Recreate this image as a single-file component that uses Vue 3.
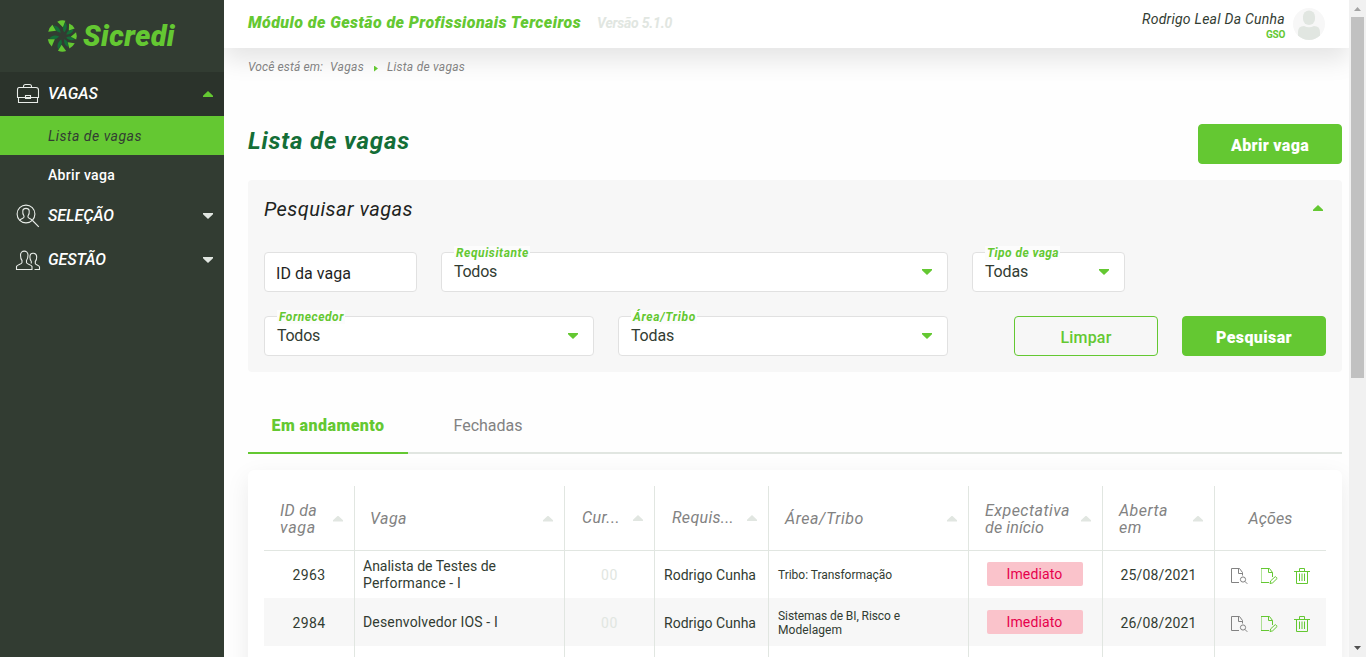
<script setup>
const fit = (el, { value }) => {
  el.style.letterSpacing = '0px'
  const natural = el.getBoundingClientRect().width
  const count = el.textContent.length
  el.style.letterSpacing = `${(value - natural) / count}px`
}
const vFit = { mounted: fit }

const blades = [
  { angle: -6, scale: 1 },
  { angle: -58, scale: 1 },
  { angle: -117, scale: 1 },
  { angle: 184, scale: 1 },
  { angle: 138, scale: 0.9 },
  { angle: 90, scale: 0.88 },
  { angle: 42, scale: 0.9 },
]

const menu = [
  { id: 'selecao', label: 'SELEÇÃO', width: 66 },
  { id: 'gestao', label: 'GESTÃO', width: 58 },
]

const columns = [
  { key: 'id', lines: [['ID da', 37], ['vaga', 36]], sort: true },
  { key: 'vaga', lines: [['Vaga', 37]], sort: true },
  { key: 'cur', lines: [['Cur...', 38]], sort: true, clipped: true },
  { key: 'req', lines: [['Requis...', 62]], sort: true, clipped: true },
  { key: 'area', lines: [['Área/Tribo', 79]], sort: true },
  { key: 'exp', lines: [['Expectativa', 85], ['de início', 59]], sort: true },
  { key: 'data', lines: [['Aberta', 49], ['em', 23]], sort: true },
  { key: 'acoes', lines: [['Ações', 44]], sort: false },
]

const rows = [
  {
    id: '2963',
    vaga: [['Analista de Testes de', 133], ['Performance - I', 98]],
    area: [['Tribo: Transformação', 114]],
    date: '25/08/2021',
  },
  {
    id: '2984',
    vaga: [['Desenvolvedor IOS - I', 135]],
    area: [['Sistemas de BI, Risco e', 122], ['Modelagem', 64]],
    date: '26/08/2021',
  },
  { blank: true },
]
</script>

<template>
  <div class="app">
    <aside class="sidebar">
      <div class="logo">
        <svg class="logo-mark" width="32" height="32" viewBox="-16 -16 32 32">
          <g v-for="b in blades" :key="b.angle" :transform="`rotate(${b.angle}) scale(${b.scale})`">
            <path d="M3.800-13.500C5.800-9.500 4.600-6.500 1.600-3.600C.4-6 .4-8.500 1.600-10Z" fill="#146e37" />
            <path d="M-4.200-14.800Q0-16.400 4-15L.8-8.800Z" fill="#64c832" />
          </g>
        </svg>
        <span v-fit="92" class="logo-text">Sicredi</span>
      </div>

      <nav>
        <div class="group open">
          <svg class="nav-icon" width="26" height="24" viewBox="0 0 26 24">
            <g fill="none" stroke="#e8ece8" stroke-width="1.100">
              <path d="M8.500 5.500V4.500Q8.500 2.500 10.500 2.500H14.500Q16.500 2.500 16.500 4.500V5.500" />
              <path d="M4 5.500H21Q23.500 5.500 23.500 8V15.500H15.500V13.500H10.500V15.500H2.500V8Q2.500 5.500 4 5.500Z" />
              <path d="M10.500 15.500H15.500V16.500H10.500ZM3.500 15.500V20.500H22.500V15.500" />
            </g>
          </svg>
          <span v-fit="50" class="group-label">VAGAS</span>
          <i class="tri up green"></i>
        </div>
        <div class="sub active"><span v-fit="94">Lista de vagas</span></div>
        <div class="sub"><span v-fit="67">Abrir vaga</span></div>
        <div v-for="m in menu" :key="m.id" class="group">
          <svg v-if="m.id === 'selecao'" class="nav-icon" width="26" height="26" viewBox="0 0 26 26">
            <g fill="none" stroke="#e8ece8" stroke-width="1.100">
              <circle cx="11" cy="11" r="8.900" />
              <path d="M17.500 17.500L23.800 23.800" />
              <path d="M5 17.500C5.500 15.500 9 15.500 9 14V13C7.800 11.500 7.500 10 7.800 7.800C8.200 4.600 13.800 4.600 14.200 7.800C14.500 10 14.200 11.500 13 13V14C13 15.500 16.500 15.500 17 17.500" />
            </g>
          </svg>
          <svg v-else class="nav-icon" width="26" height="26" viewBox="0 0 26 26">
            <g fill="none" stroke="#e8ece8" stroke-width="1.100">
              <path d="M1.500 22.500V19.500C2 17.500 7 17.500 7 15.500V13.500C5.600 12 5.500 10 5.500 8C5.500 2.800 13 2.800 13 8C13 10 12.700 12 11.500 13.500V15.500C11.500 17.500 16.500 17.500 17 19.500V22.500Z" />
              <path d="M15 9C15.500 5 21.700 5.500 21.700 10C21.700 12 21.500 13.300 20.300 14.500V16.500C20.300 18 24.500 18 24.500 20V22.500H19.500M15 9C14.700 11.500 15 13 16.300 14.500V16.500" />
            </g>
          </svg>
          <span v-fit="m.width" class="group-label">{{ m.label }}</span>
          <i class="tri down pale"></i>
        </div>
      </nav>
    </aside>

    <main class="main">
      <header class="topbar">
        <span v-fit="333" class="module">Módulo de Gestão de Profissionais Terceiros</span>
        <span v-fit="75" class="version">Versão 5.1.0</span>
        <div class="user">
          <span v-fit="143" class="user-name">Rodrigo Leal Da Cunha</span>
          <span v-fit="19" class="user-unit">GSO</span>
        </div>
        <svg class="avatar" width="32" height="32" viewBox="0 0 32 32">
          <defs><clipPath id="round"><circle cx="16" cy="16" r="16" /></clipPath></defs>
          <g clip-path="url(#round)">
            <rect width="32" height="32" fill="#f7f7f7" />
            <rect x="10" y="2.500" width="12" height="14.500" rx="6" fill="#e1e6e1" />
            <path d="M5 32V24Q5 18 11 18Q16 20.500 21 18Q27 18 27 24V32Z" fill="#e1e6e1" />
          </g>
        </svg>
      </header>

      <div class="crumbs">
        <span v-fit="75">Você está em:</span>
        <span v-fit="34" class="crumb">Vagas</span>
        <i class="crumb-arrow"></i>
        <span v-fit="78">Lista de vagas</span>
      </div>

      <div class="title-row">
        <h1><span v-fit="162">Lista de vagas</span></h1>
        <button class="btn solid"><span v-fit="78">Abrir vaga</span></button>
      </div>

      <section class="search">
        <div class="search-head">
          <h2><span v-fit="149">Pesquisar vagas</span></h2>
          <i class="tri up green"></i>
        </div>
        <div class="fields first">
          <div class="field plain"><span v-fit="75">ID da vaga</span></div>
          <div class="field">
            <label><span v-fit="73">Requisitante</span></label>
            <span v-fit="43">Todos</span><i class="tri down green"></i>
          </div>
          <div class="field">
            <label><span v-fit="72">Tipo de vaga</span></label>
            <span v-fit="43">Todas</span><i class="tri down green"></i>
          </div>
        </div>
        <div class="fields second">
          <div class="field">
            <label><span v-fit="65">Fornecedor</span></label>
            <span v-fit="43">Todos</span><i class="tri down green"></i>
          </div>
          <div class="field">
            <label><span v-fit="63">Área/Tribo</span></label>
            <span v-fit="43">Todas</span><i class="tri down green"></i>
          </div>
          <div class="actions">
            <button class="btn outline"><span v-fit="51">Limpar</span></button>
            <button class="btn solid"><span v-fit="76">Pesquisar</span></button>
          </div>
        </div>
      </section>

      <div class="tabs">
        <div class="tab current"><span v-fit="113">Em andamento</span></div>
        <div class="tab"><span v-fit="69">Fechadas</span></div>
      </div>

      <section class="card">
        <div class="grid head">
          <div v-for="c in columns" :key="c.key" class="cell" :class="[c.key, { clipped: c.clipped }]">
            <div class="lines">
              <div v-for="l in c.lines" :key="l[0]"><span v-fit="l[1]">{{ l[0] }}</span></div>
            </div>
            <i v-if="c.sort" class="tri up muted"></i>
          </div>
        </div>
        <div v-for="(r, i) in rows" :key="i" class="grid row" :class="{ striped: i % 2 }">
          <template v-if="r.blank">
            <div v-for="c in columns" :key="c.key" class="cell"></div>
          </template>
          <template v-else>
            <div class="cell center"><span v-fit="33">{{ r.id }}</span></div>
            <div class="cell job">
              <div class="lines">
                <div v-for="l in r.vaga" :key="l[0]"><span v-fit="l[1]">{{ l[0] }}</span></div>
              </div>
            </div>
            <div class="cell center count"><span v-fit="17">00</span></div>
            <div class="cell center person"><span v-fit="92">Rodrigo Cunha</span></div>
            <div class="cell team">
              <div class="lines">
                <div v-for="l in r.area" :key="l[0]"><span v-fit="l[1]">{{ l[0] }}</span></div>
              </div>
            </div>
            <div class="cell center status"><b class="badge"><span v-fit="56">Imediato</span></b></div>
            <div class="cell center"><span v-fit="76">{{ r.date }}</span></div>
            <div class="cell tools">
              <svg width="17" height="17" viewBox="0 0 17 17" fill="none" stroke="#828282">
                <path d="M8 14.500H.5V.5H8.500L11.500 4.500V7.500" />
                <path d="M7.500.5V5.500H11.500" />
                <circle cx="12" cy="11.500" r="2.600" /><path d="M13.800 13.300L16.300 15.800" />
              </svg>
              <svg width="17" height="17" viewBox="0 0 17 17" fill="none" stroke="#64c832">
                <path d="M.5 1V14" stroke-opacity=".5" />
                <path d="M8 14.500H0M0 .5H8.500L11.500 4.500V9" />
                <path d="M7.500.5V4.500H11.500" />
                <path d="M9 15.500L9.700 12.800L14.300 8.600L16.200 10.400L11.700 14.800Z" />
              </svg>
              <svg width="17" height="17" viewBox="0 0 17 17" fill="none" stroke="#64c832">
                <path d="M0 3.500H16M5.500 3V.5H10.500V3M2.500 4V15.500H13.500V4" />
                <path d="M5.500 5.500V13M8 5.500V13M10.500 5.500V13" />
              </svg>
            </div>
          </template>
        </div>
      </section>
    </main>

    <div class="scrollbar">
      <i class="arrow top"></i>
      <div class="thumb"></div>
      <i class="arrow bottom"></i>
    </div>
  </div>
</template>

<style>
html, body { margin: 0; overflow: hidden; background: #fff; }
</style>

<style scoped>
* { box-sizing: border-box; }
.app {
  display: flex; width: 1366px; height: 657px; overflow: hidden;
  font-family: Roboto, "Noto Sans", sans-serif; font-size: 14px; color: #323c32; background: #fefefe;
}
span { display: inline-block; white-space: nowrap; vertical-align: top; }
h1, h2 { margin: 0; font-style: italic; }
i { display: block; flex: none; }

.tri { width: 10px; height: 6px; }
.tri.up { clip-path: polygon(50% 0, 100% 80%, 100% 100%, 0 100%, 0 80%); }
.tri.down { clip-path: polygon(0 0, 100% 0, 100% 20%, 50% 100%, 0 20%); }
.green { background: #64c832; }
.pale { background: #e1e6e1; }
.muted { background: #e1e6e1; }

.sidebar { flex: none; width: 224px; background: #323c32; color: #fff; position: relative; z-index: 2; }
.logo { height: 72px; display: flex; align-items: center; padding-left: 47px; }
.logo-mark { flex: none; }
.logo-text { margin-left: 4px; font-size: 29px; font-weight: 900; font-style: italic; color: #64c832; line-height: 34px; }
.group { height: 44px; display: flex; align-items: center; padding: 0 11px 0 15px; }
.group.open { background: #2b332b; }
.group-label { margin: -2px 0 0 7px; font-size: 16px; font-weight: 500; font-style: italic; }
.group .tri { margin-left: auto; }
.sub { height: 39px; display: flex; align-items: center; padding-left: 48px; font-weight: 500; padding-top: 1px; }
.sub.active { background: #64c832; color: #323c32; font-style: italic; font-weight: 400; }

.main { flex: none; width: 1125px; height: 657px; overflow: hidden; }
.topbar {
  height: 48px; display: flex; align-items: center; padding: 0 24px; background: #fff;
  box-shadow: 0 12px 24px rgba(0, 0, 0, .1); position: relative;
}
.module { font-size: 16px; font-weight: 900; font-style: italic; color: #64c832; margin-top: -3px; }
.version { margin-left: 16px; font-size: 14px; font-weight: 700; font-style: italic; color: #e1e6e1; margin-top: -2px; }
.user { margin-left: auto; display: flex; flex-direction: column; align-items: flex-end; padding-top: 4px; }
.user-name { font-style: italic; line-height: 17px; }
.user-unit { font-size: 10px; font-weight: 700; color: #64c832; line-height: 13px; }
.avatar { margin-left: 8px; }

.crumbs {
  display: flex; align-items: center; height: 38px; padding-left: 24px;
  font-size: 12px; font-style: italic; color: #828282; position: relative;
}
.crumb { margin-left: 7px; }
.crumb-arrow { width: 4px; height: 6px; margin: 3px 9px 0 10px; background: #64c832; clip-path: polygon(0 0, 100% 50%, 0 100%); }

.title-row { display: flex; align-items: center; justify-content: space-between; height: 40px; margin: 38px 7px 0 24px; }
h1 { font-size: 24px; font-weight: 700; color: #146e37; line-height: 28px; margin-top: -6px; }
.btn {
  display: flex; align-items: center; justify-content: center; width: 144px; height: 40px; padding: 3px 0 0;
  border: 1px solid #64c832; border-radius: 4px; font-family: inherit; font-size: 16px;
}
.btn.solid { background: #64c832; color: #fff; font-weight: 900; }
.btn.outline { background: transparent; color: #64c832; font-weight: 500; }

.search { margin: 16px 7px 0 24px; height: 192px; padding: 16px; background: #f7f7f7; border-radius: 4px; }
.search-head { display: flex; align-items: center; justify-content: space-between; height: 24px; padding-right: 3px; }
h2 { font-size: 20px; font-weight: 400; color: #1e241e; line-height: 24px; margin-top: 1px; }
.fields { display: grid; column-gap: 24px; }
.fields.first { grid-template-columns: 153px 507px 153px; margin-top: 32px; }
.fields.second { grid-template-columns: 330px 330px 1fr; margin-top: 24px; }
.field {
  display: flex; align-items: center; justify-content: space-between; height: 40px; padding: 0 15px 0 12px;
  border: 1px solid #e1e1e1; border-radius: 4px; background: #fff; font-size: 16px; position: relative;
}
.field > span { margin-top: -2px; }
.field.plain { padding: 5px 0 0 11px; color: #1e241e; }
.field label {
  position: absolute; left: 12px; top: -7px; padding: 0 1px 0 2px; background: #fcfcfc;
  font-size: 12px; line-height: 14px; font-weight: 700; font-style: italic; color: #64c832;
}
.field label span { display: block; }
.actions { display: flex; justify-content: flex-end; gap: 24px; }

.tabs { display: flex; height: 58px; margin: 24px 7px 0 24px; border-bottom: 2px solid #e1e6e1; }
.tab { width: 160px; height: 58px; padding: 20px 0 0; text-align: center; font-size: 16px; line-height: 20px; color: #828282; }
.tab.current { border-bottom: 2px solid #64c832; color: #64c832; font-weight: 900; }

.card {
  margin: 16px 7px 0 24px; height: 240px; padding: 16px 16px 0; background: #fff; border-radius: 6px;
  box-shadow: 0 8px 24px rgba(0, 0, 0, .08);
}
.grid { display: grid; grid-template-columns: 91px 210px 90px 114px 200px 134px 112px 111px; height: 48px; }
.grid.head { height: 65px; border-bottom: 1px solid #e1e6e1; font-size: 16px; font-style: italic; color: #828282; }
.grid.row:nth-child(2) { height: 47px; }
.striped { background: #f7f7f7; }
.cell { display: flex; align-items: center; border-right: 1px solid #e1e6e1; min-width: 0; }
.cell:last-child { border-right: 0; }
.head .cell { justify-content: space-between; padding: 1px 11px 0 16px; line-height: 17px; }
.head .cell.vaga { padding-left: 15px; }
.head .cell.clipped { padding-top: 0; padding-left: 17px; }
.head .clipped .lines { margin-top: -1px; }
.head .cell.acoes { justify-content: center; padding: 1px 0 0; }
.center { justify-content: center; padding-top: 1px; }
.count { color: #e1e6e1; }
.lines { line-height: 17px; }
.job { padding: 1px 0 0 8px; }
.team { padding: 1px 0 0 9px; font-size: 12px; }
.team .lines { line-height: 14px; }
.person { padding-right: 3px; }
.status { padding-right: 2px; }
.badge {
  display: flex; align-items: center; justify-content: center; width: 96px; height: 24px; margin-top: -2px;
  border-radius: 2px; background: #fac3cb; color: #e6004b; font-weight: 400;
}
.tools { padding: 4px 0 0 16px; }
.tools svg:nth-child(2) { margin-left: 13px; }
.tools svg:nth-child(3) { margin-left: 16px; }

.scrollbar {
  flex: none; width: 17px; height: 657px; padding: 0 2px; background: #f1f1f1;
  display: flex; flex-direction: column; position: relative; z-index: 2;
}
.arrow { width: 7px; height: 4px; margin-left: 3px; }
.arrow.top { margin-top: 7px; background: #a3a3a3; clip-path: polygon(50% 0, 100% 100%, 0 100%); }
.arrow.bottom { margin-top: auto; margin-bottom: 7px; background: #505050; clip-path: polygon(0 0, 100% 0, 50% 100%); }
.thumb { margin-top: 6px; height: 361px; background: #c1c1c1; }
</style>
